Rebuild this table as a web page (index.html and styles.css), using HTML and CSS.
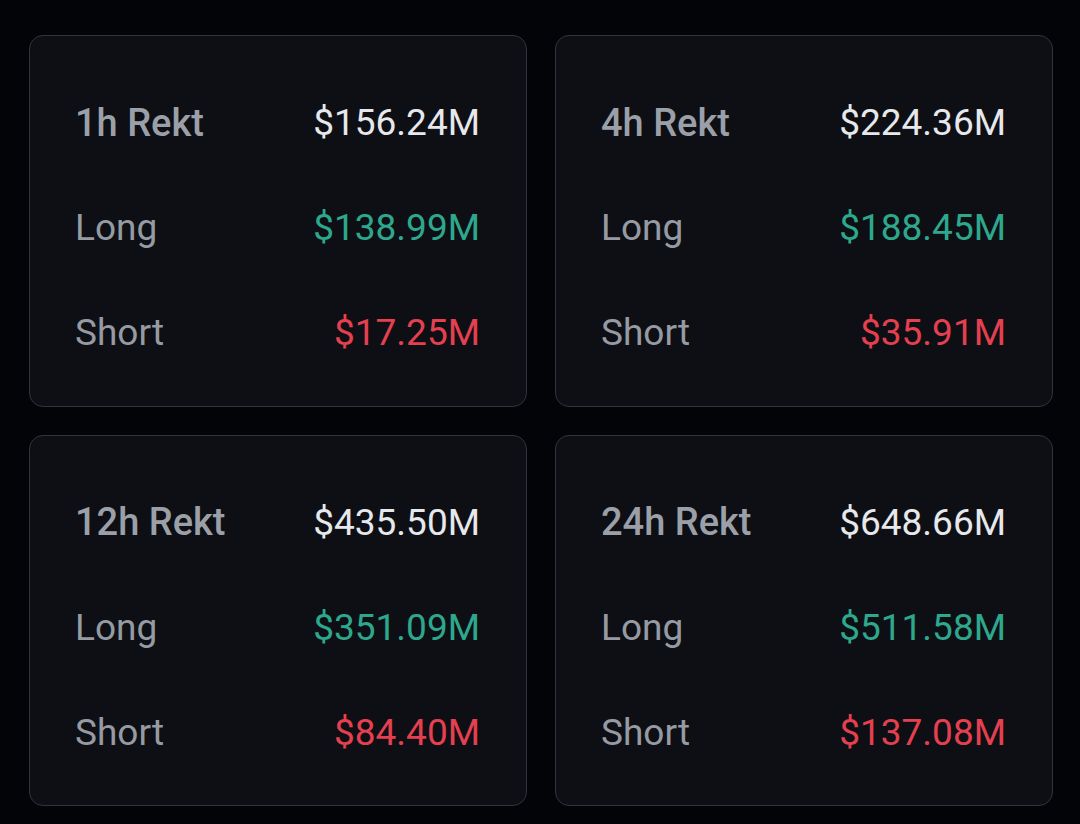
FILE: index.html
```html
<!DOCTYPE html>
<html lang="en">
<head>
<meta charset="utf-8">
<title>Rekt</title>
<link rel="stylesheet" href="styles.css">
</head>
<body>
<main class="grid">
  <section class="card">
    <div class="row"><span class="title">1h Rekt</span><span class="val">$156.24M</span></div>
    <div class="row"><span class="label">Long</span><span class="val green">$138.99M</span></div>
    <div class="row"><span class="label">Short</span><span class="val red">$17.25M</span></div>
  </section>
  <section class="card">
    <div class="row"><span class="title">4h Rekt</span><span class="val">$224.36M</span></div>
    <div class="row"><span class="label">Long</span><span class="val green">$188.45M</span></div>
    <div class="row"><span class="label">Short</span><span class="val red">$35.91M</span></div>
  </section>
  <section class="card">
    <div class="row"><span class="title">12h Rekt</span><span class="val">$435.50M</span></div>
    <div class="row"><span class="label">Long</span><span class="val green">$351.09M</span></div>
    <div class="row"><span class="label">Short</span><span class="val red">$84.40M</span></div>
  </section>
  <section class="card">
    <div class="row"><span class="title">24h Rekt</span><span class="val">$648.66M</span></div>
    <div class="row"><span class="label">Long</span><span class="val green">$511.58M</span></div>
    <div class="row"><span class="label">Short</span><span class="val red">$137.08M</span></div>
  </section>
</main>
</body>
</html>
```
FILE: styles.css
```css
html, body {
  margin: 0;
  padding: 0;
  background: #030408;
}
body {
  font-family: Roboto, "Liberation Sans", sans-serif;
}
.grid {
  box-sizing: border-box;
  height: 824px;
  display: grid;
  grid-template-columns: 1fr 1fr;
  grid-template-rows: 1fr 1fr;
  column-gap: 28px;
  row-gap: 28px;
  padding: 35px 27px 18px 29px;
}
.card {
  box-sizing: border-box;
  background: #0d0f15;
  border: 1.5px solid #30343c;
  border-radius: 14px;
  padding: 34px 46px 20px 45px;
  display: flex;
  flex-direction: column;
}
.row {
  flex: 1;
  display: flex;
  align-items: center;
  justify-content: space-between;
  font-size: 37px;
  line-height: 1;
}
.title {
  color: #9ba0a8;
  font-weight: 500;
  font-size: 38px;
}
.label {
  color: #969ba3;
  font-weight: 400;
}
.val {
  color: #e6e8eb;
  font-weight: 400;
}
.green { color: #2ea88c; }
.red { color: #e4404f; }
```
